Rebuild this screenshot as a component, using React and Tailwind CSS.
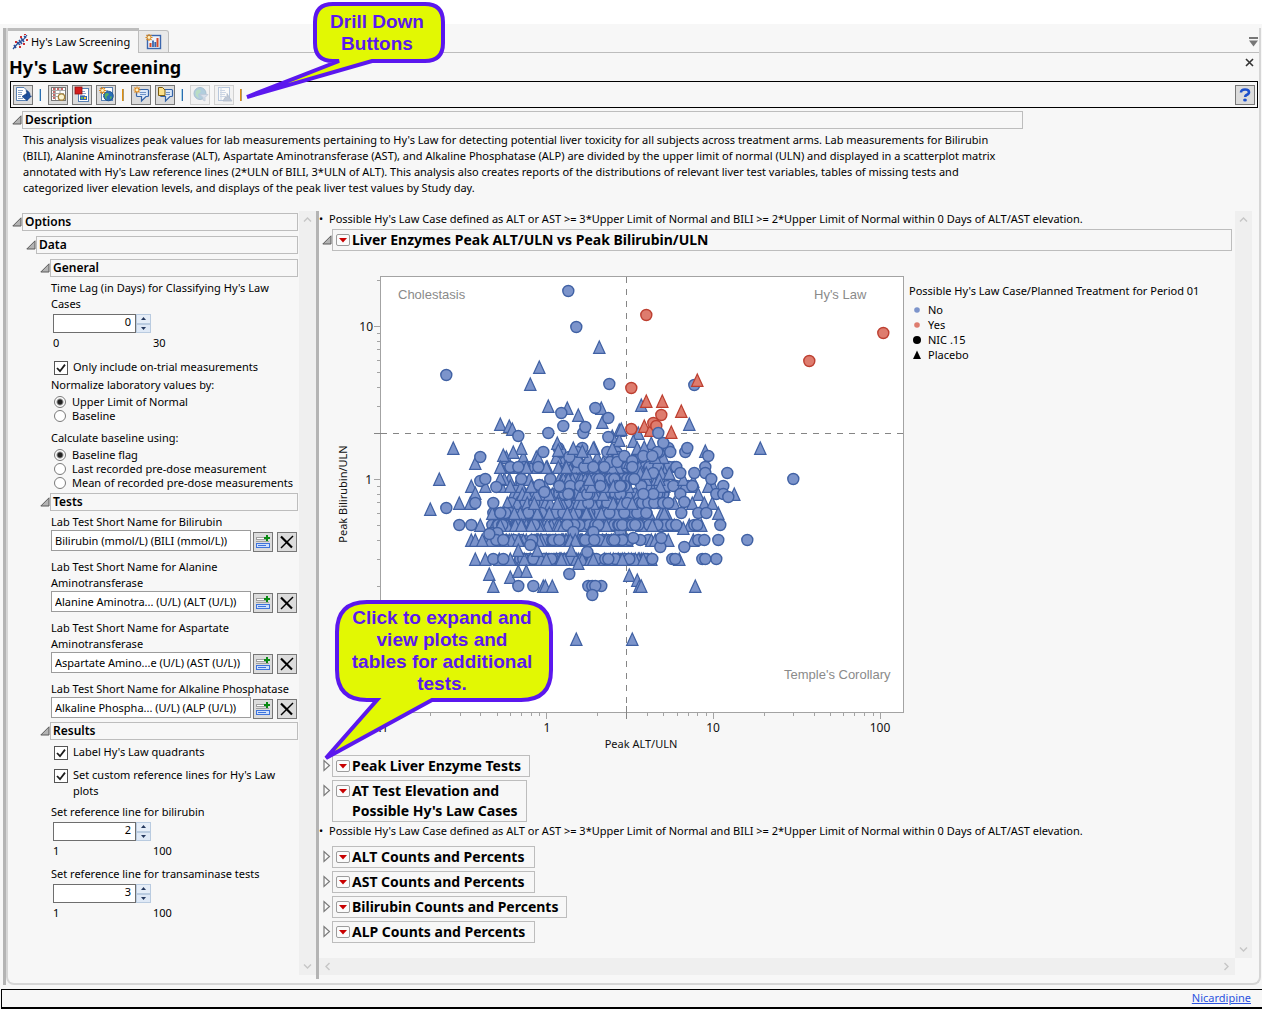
import React, { useState } from "react";

/* ---------- small shared pieces ---------- */

function OpenArrow() {
  return (
    <svg width="10" height="10" viewBox="0 0 10 10" className="shrink-0">
      <path d="M9 0.8V9H0.8Z" fill="#b4b4b4" stroke="#5a5a5a" strokeWidth="1" />
    </svg>
  );
}

function ClosedArrow() {
  return (
    <svg width="8" height="13" viewBox="0 0 8 13" className="shrink-0">
      <path d="M1 1.5V11.5L6.5 6.5Z" fill="#fafafa" stroke="#7a7a7a" strokeWidth="1.2" />
    </svg>
  );
}

function SectionHeader({ title, className }) {
  return (
    <div className={"flex items-center " + className}>
      <button type="button" aria-label={"Collapse " + title} className="flex w-[10px] shrink-0">
        <OpenArrow />
      </button>
      <h3 className="h-[18px] flex-1 border border-[#bdbdbd] pl-[2px] text-xs font-semibold leading-4">{title}</h3>
    </div>
  );
}

function RedMenu({ label }) {
  return (
    <button
      type="button"
      aria-label={label + " menu"}
      className="flex h-3 w-[14px] shrink-0 items-center justify-center rounded-[2px] border border-[#9c9c9c] bg-[#fbfbfb]"
    >
      <svg width="8" height="5" viewBox="0 0 8 5">
        <path d="M0 0H8L4 4.5Z" fill="#c80000" />
      </svg>
    </button>
  );
}

function Note() {
  return (
    <p className="flex h-4 gap-[6px] leading-4">
      <span className="w-1">•</span>
      Possible Hy's Law Case defined as ALT or AST &gt;= 3*Upper Limit of Normal and BILI &gt;= 2*Upper Limit of Normal within 0 Days of ALT/AST elevation.
    </p>
  );
}

function Outline({ lines, width }) {
  return (
    <div className="flex items-start pl-1">
      <button type="button" aria-label={"Expand " + lines[0]} className="mt-1 flex w-[9px]">
        <ClosedArrow />
      </button>
      <div className={"flex items-start gap-[2px] border border-[#bdbdbd] pl-[3px] " + width}>
        <span className="mt-1 flex">
          <RedMenu label={lines[0]} />
        </span>
        <h2 className="whitespace-nowrap text-sm font-bold leading-5">
          {lines.map((l) => (
            <span key={l} className="block">{l}</span>
          ))}
        </h2>
      </div>
    </div>
  );
}

/* ---------- toolbar ---------- */

const Page = ({ x = 2, y = 1, w = 11 }) => (
  <g>
    <rect x={x + 0.5} y={y + 0.5} width={w} height="13" fill="#fff" stroke="#5a82b4" />
    <path d={`M${x + 2} ${y + 3.5}h5M${x + 2} ${y + 5.5}h6M${x + 2} ${y + 7.5}h5M${x + 2} ${y + 9.5}h6`} stroke="#8aa4c8" />
  </g>
);

const Burst = ({ x, y }) => (
  <g stroke="#e08a1e" strokeWidth="1.2">
    <path d={`M${x - 3.5} ${y}h7M${x} ${y - 3.5}v7M${x - 2.5} ${y - 2.5}l5 5M${x + 2.5} ${y - 2.5}l-5 5`} />
    <circle cx={x} cy={y} r="1.4" fill="#fff3c4" stroke="none" />
  </g>
);

const Bubble = () => (
  <path
    d="M4 3.5H14.5Q15.5 3.5 15.5 4.5V9.5Q15.5 10.5 14.5 10.5H13L8.5 15V10.5H4.5Q3.5 10.5 3.5 9.5V4Z"
    fill="#dbe8f8"
    stroke="#3564a8"
    strokeWidth="1.2"
  />
);

const ICONS = {
  rerun: (
    <>
      <path d="M1.5 1.5H9L12.5 5V14.5H1.5Z" fill="#fff" stroke="#5a82b4" />
      <path d="M3 4.5h5M3 6.5h4M3 8.5h4M3 10.5h3M3 12.5h5" stroke="#8aa4c8" />
      <path d="M11 4.5Q15.5 5.5 15 10L16.5 10L12 14.5L7 10.5L11.5 7.5V9.5Q12.5 7 11 4.5Z" fill="#1e4f9c" stroke="#123a78" strokeWidth=".6" />
    </>
  ),
  table: (
    <>
      <rect x="1.5" y="1.5" width="14" height="13" fill="#fff" stroke="#777" />
      <path d="M2 4.5H15M2 7.5H14M2 10.5H14M5.5 2V14M10 2V9" stroke="#aaa" />
      <path d="M3 3h12M3 6h2M3 9h2M3 12h2" stroke="#b43a3a" strokeWidth="1.4" strokeDasharray="2 2" />
      <circle cx="11.5" cy="11" r="3.2" fill="#fbf3cf" stroke="#a5823b" strokeWidth="1.3" />
    </>
  ),
  data: (
    <>
      <Page x={4} y={2} w={10} />
      <rect x="1" y="1" width="7" height="7" fill="#d41c1c" stroke="#8e1010" strokeWidth=".8" />
      <rect x="6" y="10" width="7" height="4" fill="#2f66b4" />
      <path d="M7 12h2" stroke="#5cb85c" strokeWidth="2" />
      <path d="M10 12h2" stroke="#e8c840" strokeWidth="2" />
    </>
  ),
  globe: (
    <>
      <Page x={3} y={1} w={11} />
      <circle cx="10.5" cy="10" r="4.8" fill="#2a6fb8" stroke="#174a86" strokeWidth=".8" />
      <path d="M7 8Q9 6 11 8Q10 10 8.5 10.5Q8.5 12 9 13.5Q6 12 7 8M12 10.5h2Q13.5 13 12 13Z" fill="#55b060" />
      <Burst x={4.5} y={4.5} />
    </>
  ),
  addNote: (
    <>
      <Bubble />
      <path d="M7 6.5h6M7 8.5h6" stroke="#6f94c8" />
      <Burst x={4} y={4} />
    </>
  ),
  noteDoc: (
    <>
      <Bubble />
      <path d="M9 6.5h4M9 8.5h4" stroke="#6f94c8" />
      <path d="M1.5 1.5H5.5L8 4V9.5H1.5Z" fill="#fbe08a" stroke="#7a5c12" />
    </>
  ),
  globeFilter: (
    <>
      <circle cx="8" cy="7.5" r="6" fill="#4a90b8" stroke="#2f6a92" />
      <path d="M4 5Q7 2 9 5Q8 8 6 8Q6 10 7 12Q2 10 4 5" fill="#5eb87a" />
      <path d="M8 8.5H16L13 11.5V15L11 14V11.5Z" fill="#a8bcd8" stroke="#6b84a8" strokeWidth=".8" />
    </>
  ),
  reportUser: (
    <>
      <Page x={2} />
      <path d="M5 1v13" stroke="#8aa4c8" />
      <path d="M7 15L9 11.5L11 11V7.5L13 11L16 15Z" fill="#6b84a8" stroke="#4c6488" strokeWidth=".8" />
    </>
  ),
};

function ToolButton({ icon, label, disabled }) {
  return (
    <button
      type="button"
      aria-label={label}
      disabled={disabled}
      className="flex size-5 items-center justify-center border border-[#777] bg-[#dcdcdc] disabled:border-[#999] disabled:bg-[#ececec] disabled:opacity-40"
    >
      <svg width="17" height="17" viewBox="0 0 17 17" className="shrink-0">{ICONS[icon]}</svg>
    </button>
  );
}

const BlueBar = () => <span className="mr-[7px] ml-[6px] h-3 w-[2px] border-r border-[#2a6db0] bg-[#a9d3e6]" />;
const OrangeBar = () => <span className="mr-[7px] ml-[6px] h-3 w-[2px] border-r border-[#b09a6a] bg-[#e08e10]" />;

function Toolbar() {
  return (
    <div role="toolbar" className="flex h-[27px] items-center border border-black px-[2px]">
      <ToolButton icon="rerun" label="Rerun" />
      <BlueBar />
      <div className="flex gap-1">
        <ToolButton icon="table" label="View data" />
        <ToolButton icon="data" label="Subset data" />
        <ToolButton icon="globe" label="Create report" />
      </div>
      <OrangeBar />
      <div className="flex gap-1">
        <ToolButton icon="addNote" label="Add note" />
        <ToolButton icon="noteDoc" label="View notes" />
      </div>
      <BlueBar />
      <div className="flex gap-1">
        <ToolButton icon="globeFilter" label="Filter" disabled />
        <ToolButton icon="reportUser" label="Profile" disabled />
      </div>
      <OrangeBar />
      <button type="button" aria-label="Help" className="ml-auto flex size-5 items-center justify-center border border-[#777] bg-[#dcdcdc]">
        <svg width="12" height="14" viewBox="0 0 12 14">
          <path d="M2 4.5Q2 1.5 6 1.5Q10 1.5 10 4.2Q10 6 7.5 7Q6.2 7.6 6.2 9" fill="none" stroke="#1c50cc" strokeWidth="2.6" />
          <ellipse cx="6" cy="12" rx="1.9" ry="1.5" fill="#1c50cc" />
        </svg>
      </button>
    </div>
  );
}

/* ---------- option controls ---------- */

function NumberField({ id, label, value, min, max }) {
  const [v, setV] = useState(value);
  return (
    <div>
      <label htmlFor={id} className="block w-[246px]">{label}</label>
      <div className="mt-[2px] flex h-[19px] pl-[2px]">
        <input
          id={id}
          inputMode="numeric"
          value={v}
          onChange={(e) => setV(e.target.value)}
          className="w-[83px] border border-[#6e6e6e] bg-white pr-1 pb-[3px] text-right text-[11px] leading-4"
        />
        <div className="flex w-[15px] flex-col">
          <button type="button" aria-label="Increase" onClick={() => setV(+v + 1)} className="flex flex-1 items-center justify-center border border-[#b9cbe0] bg-[#e6eef8]">
            <svg width="5" height="3" viewBox="0 0 5 3"><path d="M0 3L2.5 0L5 3Z" fill="#24385e" /></svg>
          </button>
          <button type="button" aria-label="Decrease" onClick={() => setV(+v - 1)} className="flex flex-1 items-center justify-center border border-[#b9cbe0] bg-[#dfe9f6]">
            <svg width="5" height="3" viewBox="0 0 5 3"><path d="M0 0L2.5 3L5 0Z" fill="#24385e" /></svg>
          </button>
        </div>
      </div>
      <div className="mt-[2px] flex pl-[2px]">
        <span className="w-[100px]">{min}</span>
        <span>{max}</span>
      </div>
    </div>
  );
}

function Check({ id, label }) {
  return (
    <div className="flex gap-[5px] pl-[3px]">
      <span className="relative mt-[2px] flex size-[14px] shrink-0">
        <input id={id} type="checkbox" defaultChecked className="peer size-[14px] appearance-none border border-[#555] bg-white" />
        <svg width="14" height="14" viewBox="0 0 14 14" className="pointer-events-none absolute inset-0 hidden peer-checked:block">
          <path d="M3 7L6 10.2L11 3.6" fill="none" stroke="#1c1c1c" strokeWidth="1.8" />
        </svg>
      </span>
      <label htmlFor={id} className="w-[216px]">{label}</label>
    </div>
  );
}

function Radios({ name, legend, options }) {
  return (
    <fieldset>
      <legend className="mb-[2px] leading-4">{legend}</legend>
      {options.map((o, i) => (
        <div key={o} className="flex h-[14px] items-center gap-[6px] pl-[3px]">
          <input
            id={name + i}
            type="radio"
            name={name}
            defaultChecked={i === 0}
            className="size-3 shrink-0 appearance-none rounded-full border border-[#7a7a7a] bg-white checked:bg-[radial-gradient(circle,#222_0_2px,#fff_4px)]"
          />
          <label htmlFor={name + i} className="whitespace-nowrap">{o}</label>
        </div>
      ))}
    </fieldset>
  );
}

function TestField({ id, label, value }) {
  return (
    <div>
      <label htmlFor={id} className="block w-[246px]">{label}</label>
      <div className="flex">
        <input id={id} readOnly value={value} className="h-[21px] min-w-0 flex-1 border border-[#9c9c9c] bg-white px-[3px] text-[11px]" />
        <button type="button" aria-label={"Choose: " + label} className="mt-[2px] ml-[2px] flex size-5 items-center justify-center border border-[#777] bg-[#dcdcdc]">
          <svg width="16" height="16" viewBox="0 0 16 16">
            <rect x="1.5" y="3.5" width="9" height="2" fill="#fff" stroke="#a0a0a0" />
            <path d="M1 7.5H14" stroke="#a0a0a0" />
            <rect x="1.5" y="9.5" width="13" height="4" fill="#cfe0fb" stroke="#3f74dc" />
            <path d="M3 11.5H11" stroke="#3f74dc" />
            <path d="M12 1V7M9 4H15" stroke="#0a8a14" strokeWidth="2" />
          </svg>
        </button>
        <button type="button" aria-label={"Clear: " + label} className="mt-[2px] ml-1 flex size-5 items-center justify-center border border-[#777] bg-[#dcdcdc]">
          <svg width="16" height="16" viewBox="0 0 16 16">
            <path d="M2 2.5L13 13.5" stroke="#000" strokeWidth="2.2" />
            <path d="M14 2L2 14" stroke="#000" strokeWidth="1.4" />
          </svg>
        </button>
      </div>
    </div>
  );
}

function Chevron({ d }) {
  return (
    <svg width="9" height="9" viewBox="0 0 9 9" className="shrink-0">
      <path d={d} fill="none" stroke="#c6c6c6" strokeWidth="1.4" />
    </svg>
  );
}
const UP = "M1 6.5L4.5 3L8 6.5";
const DOWN = "M1 2.5L4.5 6L8 2.5";
const LEFT = "M6.5 1L3 4.5L6.5 8";
const RIGHT = "M2.5 1L6 4.5L2.5 8";

function OptionsPanel() {
  return (
    <aside className="w-[290px] shrink-0 pt-[2px] pl-1">
      <SectionHeader title="Options" className="" />
      <SectionHeader title="Data" className="mt-[5px] ml-[14px]" />
      <SectionHeader title="General" className="mt-[5px] ml-7" />
      <div className="pt-[3px] pl-[39px]">
        <NumberField id="lag" label="Time Lag (in Days) for Classifying Hy's Law Cases" value="0" min="0" max="30" />
        <div className="mt-2"><Check id="trial" label="Only include on-trial measurements" /></div>
        <div className="mt-[2px]">
          <Radios name="norm" legend="Normalize laboratory values by:" options={["Upper Limit of Normal", "Baseline"]} />
        </div>
        <div className="mt-[7px]">
          <Radios
            name="base"
            legend="Calculate baseline using:"
            options={["Baseline flag", "Last recorded pre-dose measurement", "Mean of recorded pre-dose measurements"]}
          />
        </div>
      </div>
      <SectionHeader title="Tests" className="mt-[3px] ml-7" />
      <div className="flex flex-col gap-[7px] pt-[3px] pr-px pl-[39px]">
        <TestField id="bili" label="Lab Test Short Name for Bilirubin" value="Bilirubin (mmol/L) (BILI (mmol/L))" />
        <TestField id="alt" label="Lab Test Short Name for Alanine Aminotransferase" value="Alanine Aminotra... (U/L) (ALT (U/L))" />
        <TestField id="ast" label="Lab Test Short Name for Aspartate Aminotransferase" value="Aspartate Amino...e (U/L) (AST (U/L))" />
        <TestField id="alp" label="Lab Test Short Name for Alkaline Phosphatase" value="Alkaline Phospha... (U/L) (ALP (U/L))" />
      </div>
      <SectionHeader title="Results" className="mt-[3px] ml-7" />
      <div className="flex flex-col gap-[7px] pt-1 pl-[39px]">
        <Check id="quad" label="Label Hy's Law quadrants" />
        <Check id="custom" label="Set custom reference lines for Hy's Law plots" />
        <div className="-mt-[2px]">
          <NumberField id="refb" label="Set reference line for bilirubin" value="2" min="1" max="100" />
        </div>
        <NumberField id="reft" label="Set reference line for transaminase tests" value="3" min="1" max="100" />
      </div>
    </aside>
  );
}

/* ---------- scatter plot ---------- */

const X0 = 547.3, XD = 166.7, Y0 = 479.3, YD = 153;
const sx = (v) => X0 + XD * Math.log10(v);
const sy = (v) => Y0 - YD * Math.log10(v);

// Crowded bands: [y, from, to, count, share of circles]
const BANDS = [
  [448, 556, 600, 3, 0.4], [452, 556, 664, 6, 0.6], [457, 504, 540, 3, 0], [457, 555, 668, 12, 0.5], [462, 560, 650, 8, 0.5],
  [467, 499, 548, 9, 0.2], [467, 558, 600, 16, 0.3], [467, 604, 676, 14, 0.6], [473, 590, 664, 9, 0.6],
  [479, 498, 535, 4, 0], [479, 558, 590, 16, 0.1], [479, 595, 632, 13, 0.5], [479, 636, 664, 4, 0.5],
  [486, 496, 552, 7, 0.2], [486, 558, 630, 18, 0.5], [486, 640, 694, 12, 0.7],
  [494, 512, 556, 18, 0.15], [494, 558, 600, 24, 0.6], [494, 602, 644, 22, 0.6], [494, 652, 666, 5, 1],
  [503, 506, 552, 13, 0.25], [503, 556, 632, 34, 0.5], [503, 636, 676, 9, 0.8],
  [513, 490, 550, 24, 0.35], [513, 554, 606, 32, 0.4], [513, 608, 650, 20, 0.7], [513, 660, 668, 3, 0],
  [525, 492, 560, 30, 0.35], [525, 560, 644, 44, 0.65], [525, 646, 678, 9, 0.7],
  [533, 488, 500, 2, 0.3], [532, 560, 624, 4, 0.5], [540, 486, 526, 20, 0.25], [540, 530, 560, 20, 0.5],
  [540, 560, 582, 16, 0.1], [540, 582, 630, 26, 0.6], [540, 648, 660, 4, 0.5],
  [559, 517, 540, 13, 0.5], [559, 540, 570, 20, 0.8], [559, 573, 597, 12, 0.2], [559, 602, 640, 20, 0.5], [559, 640, 654, 6, 0.9],
];

function bandPoints() {
  let s = 20177;
  const rnd = () => (s = (s * 16807) % 2147483647) / 2147483647;
  const out = [];
  BANDS.forEach(([y, a, b, n, c]) => {
    for (let i = 0; i < n; i++) {
      out.push([Math.round(a + ((b - a) * (i + rnd() * 0.9)) / n), y, rnd() < c]);
    }
  });
  return out.sort(() => rnd() - 0.5);
}

const CIRCLES = [
  [568, 291], [576, 327], [446, 375], [609, 384], [561, 413], [595, 408], [608, 418], [548, 433], [563, 426], [583, 433],
  [585, 427], [518, 436], [608, 437], [480, 457], [543, 452], [694, 385], [793, 479], [708, 456], [685, 452], [687, 448],
  [668, 448], [663, 443], [670, 452], [657, 452], [624, 456], [643, 456], [652, 456], [632, 461], [694, 473], [727, 473],
  [705, 467], [705, 473], [711, 479], [723, 486], [676, 467], [680, 473], [692, 486], [716, 494], [723, 494], [728, 497],
  [680, 494], [747, 540], [720, 525], [718, 540], [716, 559], [702, 559], [705, 559], [672, 559], [675, 559], [684, 547],
  [660, 547], [681, 513], [698, 513], [706, 513], [684, 502], [694, 525], [697, 525], [676, 525], [698, 540], [704, 540],
  [661, 538], [640, 540], [633, 538], [601, 586], [446, 508], [459, 525], [471, 525], [489, 534], [480, 481], [485, 479],
  [475, 503], [493, 503], [496, 487], [493, 559], [503, 559], [569, 574], [518, 586], [533, 586], [588, 586], [592, 586],
  [595, 586], [592, 595], [587, 552], [530, 545], [521, 479], [550, 479], [539, 485], [544, 492], [518, 467], [538, 467],
  [593, 467], [604, 467], [614, 540], [503, 540], [500, 513], [643, 494], [634, 479], [632, 467], [620, 486],
];

const TRIANGLES = [
  [599, 347], [539, 367], [530, 384], [548, 406], [567, 408], [601, 408], [578, 415], [602, 422], [500, 424], [509, 426],
  [512, 429], [453, 448], [619, 430], [612, 436], [619, 440], [521, 448], [513, 452], [503, 455], [475, 463], [557, 443],
  [558, 450], [573, 448], [582, 451], [593, 448], [538, 458], [641, 405], [689, 424], [760, 448], [621, 429], [638, 433],
  [633, 441], [637, 448], [651, 443], [612, 448], [644, 447], [705, 451], [640, 473], [646, 473], [669, 473], [693, 481],
  [683, 479], [713, 486], [708, 486], [734, 494], [698, 494], [718, 513], [704, 503], [712, 503], [692, 503], [701, 525],
  [689, 525], [683, 528], [693, 540], [668, 540], [679, 559], [629, 575], [637, 580], [639, 586], [641, 586], [695, 586],
  [632, 639], [439, 479], [430, 509], [459, 503], [480, 525], [471, 486], [485, 486], [475, 493], [470, 503], [500, 478],
  [471, 540], [475, 540], [482, 540], [475, 559], [485, 559], [499, 559], [510, 559], [489, 574], [493, 586], [510, 577],
  [518, 571], [526, 571], [543, 586], [545, 586], [552, 586], [576, 639], [571, 550], [537, 550], [518, 550], [578, 563],
  [500, 467], [526, 467], [546, 467],
];

const RED_CIRCLES = [[646, 315], [883, 333], [809, 361], [631, 388], [661, 415], [653, 423], [656, 426], [631, 429]];
const RED_TRIANGLES = [[697, 380], [646, 401], [662, 401], [681, 411], [644, 426], [650, 430], [671, 432]];

const BLUE = { fill: "#7c94cb", stroke: "#4061a4" };
const RED = { fill: "#de7c6e", stroke: "#bd3f30" };

function Marker({ x, y, circle, tone }) {
  return circle ? (
    <circle cx={x + 0.3} cy={y} r="5.5" fill={tone.fill} stroke={tone.stroke} strokeWidth="1.4" />
  ) : (
    <path d={`M${x + 0.3} ${y - 6}L${x + 6} ${y + 6.4}H${x - 5.4}Z`} fill={tone.fill} stroke={tone.stroke} strokeWidth="1.2" />
  );
}

const XMINOR = [0.2, 0.3, 0.4, 0.5, 0.6, 0.7, 0.8, 0.9, 2, 4, 5, 6, 7, 8, 9, 20, 30, 40, 50, 60, 70, 80, 90];
const YMINOR = [0.04, 0.05, 0.06, 0.07, 0.08, 0.09, 0.2, 0.3, 0.4, 0.5, 0.6, 0.7, 0.8, 0.9, 3, 4, 5, 6, 7, 8, 9, 20];

function ScatterPlot() {
  const band = bandPoints();
  return (
    <svg width="577" height="490" viewBox="328 262 577 490" className="shrink-0" role="img" aria-label="Peak Bilirubin/ULN by Peak ALT/ULN">
      <rect x="380.5" y="276.5" width="523" height="436" fill="#fff" stroke="#a3a3a3" />
      <g stroke="#a3a3a3">
        {XMINOR.map((v) => <path key={v} d={`M${Math.floor(sx(v)) + 0.5} 713v3`} />)}
        {[0.1, 1, 10, 100].map((v) => <path key={v} d={`M${Math.floor(sx(v) - 0.4) + 0.5} 713v6`} />)}
        {YMINOR.map((v) => <path key={v} d={`M380 ${Math.floor(sy(v)) + 0.5}h-3`} />)}
        {[0.1, 1, 10].map((v) => <path key={v} d={`M380 ${Math.floor(sy(v)) + 0.5}h-6`} />)}
      </g>
      <g stroke="#858585" fill="none">
        <path d="M626.5 277V712" strokeDasharray="6 6" />
        <path d="M381 433.5H903" strokeDasharray="6 6" />
        <path d="M626.5 706V719M374 433.5H387" />
      </g>
      <g fontFamily="Liberation Sans" fontSize="13" fill="#8a8a8a">
        <text x="398" y="299">Cholestasis</text>
        <text x="814" y="299">Hy's Law</text>
        <text x="784" y="679">Temple's Corollary</text>
      </g>
      {band.map(([x, y, c], i) => <Marker key={i} x={x} y={y} circle={c} tone={BLUE} />)}
      {TRIANGLES.map(([x, y], i) => <Marker key={i} x={x} y={y} tone={BLUE} />)}
      {CIRCLES.map(([x, y], i) => <Marker key={i} x={x} y={y} circle tone={BLUE} />)}
      {RED_TRIANGLES.map(([x, y], i) => <Marker key={i} x={x} y={y} tone={RED} />)}
      {RED_CIRCLES.map(([x, y], i) => <Marker key={i} x={x} y={y} circle tone={RED} />)}
      <Marker x={658} y={433} circle tone={BLUE} />
      <g fontSize="12" fill="#111">
        <text x="373" y="331" textAnchor="end">10</text>
        <text x="372" y="484" textAnchor="end">1</text>
        <text x="380" y="732" textAnchor="middle">0.1</text>
        <text x="547" y="732" textAnchor="middle">1</text>
        <text x="713" y="732" textAnchor="middle">10</text>
        <text x="880" y="732" textAnchor="middle">100</text>
      </g>
      <g fontSize="11" fill="#111">
        <text x="641" y="748" textAnchor="middle">Peak ALT/ULN</text>
        <text transform="translate(347 494) rotate(-90)" textAnchor="middle">Peak Bilirubin/ULN</text>
      </g>
    </svg>
  );
}

function Legend() {
  const rows = [
    ["No", <circle cx="6" cy="6" r="2.8" fill="#7c94cb" />],
    ["Yes", <circle cx="6" cy="6" r="2.8" fill="#de7c6e" />],
    ["NIC .15", <circle cx="6" cy="6" r="4" fill="#000" />],
    ["Placebo", <path d="M6 1.5L10 10H2Z" fill="#000" />],
  ];
  return (
    <div className="mt-[21px] ml-1">
      <p className="mb-[3px] leading-4 whitespace-nowrap">Possible Hy's Law Case/Planned Treatment for Period 01</p>
      <ul>
        {rows.map(([label, mark]) => (
          <li key={label} className="flex h-[15px] items-center gap-[5px] pl-[2px] text-[11px]">
            <svg width="12" height="12" viewBox="0 0 12 12">{mark}</svg>
            {label}
          </li>
        ))}
      </ul>
    </div>
  );
}

/* ---------- callouts ---------- */

function Callouts() {
  return (
    <>
      <div className="pointer-events-none absolute top-0 left-[240px] w-[210px]">
        <svg width="210" height="104" viewBox="240 0 210 104">
          <path
            d="M333 4H425Q443 4 443 22V43Q443 61 425 61H372L247 97L339 61H333Q315 61 315 43V22Q315 4 333 4Z"
            fill="#e2f803"
            stroke="#5b18ee"
            strokeWidth="4"
          />
        </svg>
        <p className="absolute top-[11px] left-[72px] w-[130px] text-center font-['Liberation_Sans',sans-serif] text-[19px] leading-[22px] font-bold text-[#5b18ee]">
          Drill Down Buttons
        </p>
      </div>
      <div className="pointer-events-none absolute top-[598px] left-[320px] w-[236px]">
        <svg width="236" height="168" viewBox="320 598 236 168">
          <path
            d="M367 602H521Q551 602 551 632V670Q551 700 521 700H432L326 758L377 700H367Q337 700 337 670V632Q337 602 367 602Z"
            fill="#e2f803"
            stroke="#5b18ee"
            strokeWidth="4"
          />
        </svg>
        <p className="absolute top-[9px] left-[28px] w-[188px] text-center font-['Liberation_Sans',sans-serif] text-[19px] leading-[22px] font-bold text-[#5b18ee]">
          Click to expand and
          <br />
          view plots and
          <br />
          tables for additional
          <br />
          tests.
        </p>
      </div>
    </>
  );
}

/* ---------- page ---------- */

export default function App() {
  return (
    <div className="relative flex min-h-screen flex-col bg-[#f7f7f7] font-['Noto_Sans',sans-serif] text-[11px] leading-4 text-black">
      <div className="h-6 bg-white" />
      <div className="mt-1 ml-[3px] flex flex-1 flex-col border-l-[3px] border-[#b4b4b4]">
        <div className="mr-px flex flex-1 flex-col rounded-b-lg border-r-2 border-b-2 border-l-2 border-[#d6d6d6]">
          <nav className="flex h-[25px] items-end">
            <button type="button" className="flex h-[25px] items-center gap-[3px] border-t-[3px] border-r border-[#bdbdbd] pr-2 pl-1 text-[11px] whitespace-nowrap">
              <svg width="16" height="16" viewBox="0 0 16 16">
                <path d="M1 15L6 9L11 6L15 1" fill="none" stroke="#2b4f9a" strokeWidth="1.2" />
                <path d="M2 11L4 14M5 8L8 11M9 4L12 8M12 2L14 4M7 6L10 10" stroke="#2b4f9a" strokeWidth="1.6" />
                <path d="M3 8h2M8 3h2M11 10h2M7 13h2M14 6h2M12 0h2" stroke="#d03030" strokeWidth="2" />
              </svg>
              Hy's Law Screening
            </button>
            <button type="button" aria-label="Open graph" className="flex h-[23px] w-[30px] items-center justify-center rounded-tr-[3px] border border-l-0 border-[#bdbdbd] bg-[#e9e9e9]">
              <svg width="17" height="16" viewBox="0 0 17 16">
                <rect x="2.5" y="1.5" width="13" height="13" fill="#eef3fb" stroke="#3b66ad" strokeWidth="1.4" />
                <path d="M5.5 13V9M12.5 13V4" stroke="#d84a2a" strokeWidth="2" />
                <path d="M8 13V6.5M10.3 13V8" stroke="#3b66ad" strokeWidth="1.8" />
                <Burst x={4} y={3.5} />
              </svg>
            </button>
            <div className="flex h-full flex-1 items-center justify-end border-b border-[#bdbdbd] pt-1 pr-px">
              <button type="button" aria-label="Tab list">
                <svg width="9" height="10" viewBox="0 0 9 10"><path d="M0 1H9" stroke="#777" strokeWidth="2" /><path d="M0 3.5H9L4.5 9.5Z" fill="#777" /></svg>
              </button>
            </div>
          </nav>

          <div className="flex h-7 items-start justify-between pr-[5px] pl-[1px]">
            <h1 className="mt-[2px] text-lg leading-6 font-bold">Hy's Law Screening</h1>
            <button type="button" aria-label="Close" className="mt-[5px]">
              <svg width="9" height="9" viewBox="0 0 9 9"><path d="M1 1L8 8M8 1L1 8" stroke="#333" strokeWidth="1.6" /></svg>
            </button>
          </div>

          <div className="mr-px ml-[2px]">
            <Toolbar />
          </div>

          <div className="ml-1 max-w-[1011px] pt-[3px]">
            <SectionHeader title="Description" className="" />
            <p className="mt-[3px] pl-[11px] whitespace-nowrap">
              This analysis visualizes peak values for lab measurements pertaining to Hy's Law for detecting potential liver toxicity for all subjects across treatment arms. Lab measurements for Bilirubin
              <br />
              (BILI), Alanine Aminotransferase (ALT), Aspartate Aminotransferase (AST), and Alkaline Phosphatase (ALP) are divided by the upper limit of normal (ULN) and displayed in a scatterplot matrix
              <br />
              annotated with Hy's Law reference lines (2*ULN of BILI, 3*ULN of ALT). This analysis also creates reports of the distributions of relevant liver test variables, tables of missing tests and
              <br />
              categorized liver elevation levels, and displays of the peak liver test values by Study day.
            </p>
          </div>

          <div className="mt-[15px] flex flex-1 pb-1">
            <OptionsPanel />
            <div className="mb-1 ml-px flex w-[17px] shrink-0 flex-col items-center justify-between bg-[#efefef] py-1">
              <Chevron d={UP} />
              <Chevron d={DOWN} />
            </div>
            <div className="w-[3px] shrink-0 bg-[#b4b4b4]" />

            <div className="mb-1 flex min-w-0 flex-1 flex-col pr-[7px]">
              <div className="flex flex-1">
                <main className="min-w-0 flex-1">
                  <Note />
                  <div className="mt-[2px] flex items-center pr-[3px] pl-[3px]">
                    <button type="button" aria-label="Collapse plot" className="flex w-[10px]">
                      <OpenArrow />
                    </button>
                    <div className="flex h-[22px] flex-1 items-center gap-[2px] border border-[#bdbdbd] pl-[3px]">
                      <RedMenu label="Plot" />
                      <h2 className="text-sm leading-5 font-bold">Liver Enzymes Peak ALT/ULN vs Peak Bilirubin/ULN</h2>
                    </div>
                  </div>
                  <div className="mt-[11px] flex pl-[9px]">
                    <ScatterPlot />
                    <Legend />
                  </div>
                  <div className="mt-[3px] flex flex-col gap-[3px]">
                    <Outline lines={["Peak Liver Enzyme Tests"]} width="w-[198px]" />
                    <Outline lines={["AT Test Elevation and", "Possible Hy's Law Cases"]} width="w-[195px]" />
                  </div>
                  <div className="mt-px">
                    <Note />
                  </div>
                  <div className="mt-[7px] flex flex-col gap-[3px]">
                    <Outline lines={["ALT Counts and Percents"]} width="w-[203px]" />
                    <Outline lines={["AST Counts and Percents"]} width="w-[203px]" />
                    <Outline lines={["Bilirubin Counts and Percents"]} width="w-[235px]" />
                    <Outline lines={["ALP Counts and Percents"]} width="w-[203px]" />
                  </div>
                </main>
                <div className="flex w-[17px] shrink-0 flex-col items-center justify-between bg-[#efefef] py-1">
                  <Chevron d={UP} />
                  <Chevron d={DOWN} />
                </div>
              </div>
              <div className="mr-[17px] flex h-[17px] items-center justify-between bg-[#efefef] px-1">
                <Chevron d={LEFT} />
                <Chevron d={RIGHT} />
              </div>
            </div>
          </div>
        </div>
      </div>

      <footer className="mt-1 ml-px flex h-5 items-center justify-end border border-r-0 border-b-2 border-black pr-[11px] pb-[2px]">
        <a href="#nicardipine" className="text-[#2a52e0] underline">Nicardipine</a>
      </footer>
      <Callouts />
    </div>
  );
}
